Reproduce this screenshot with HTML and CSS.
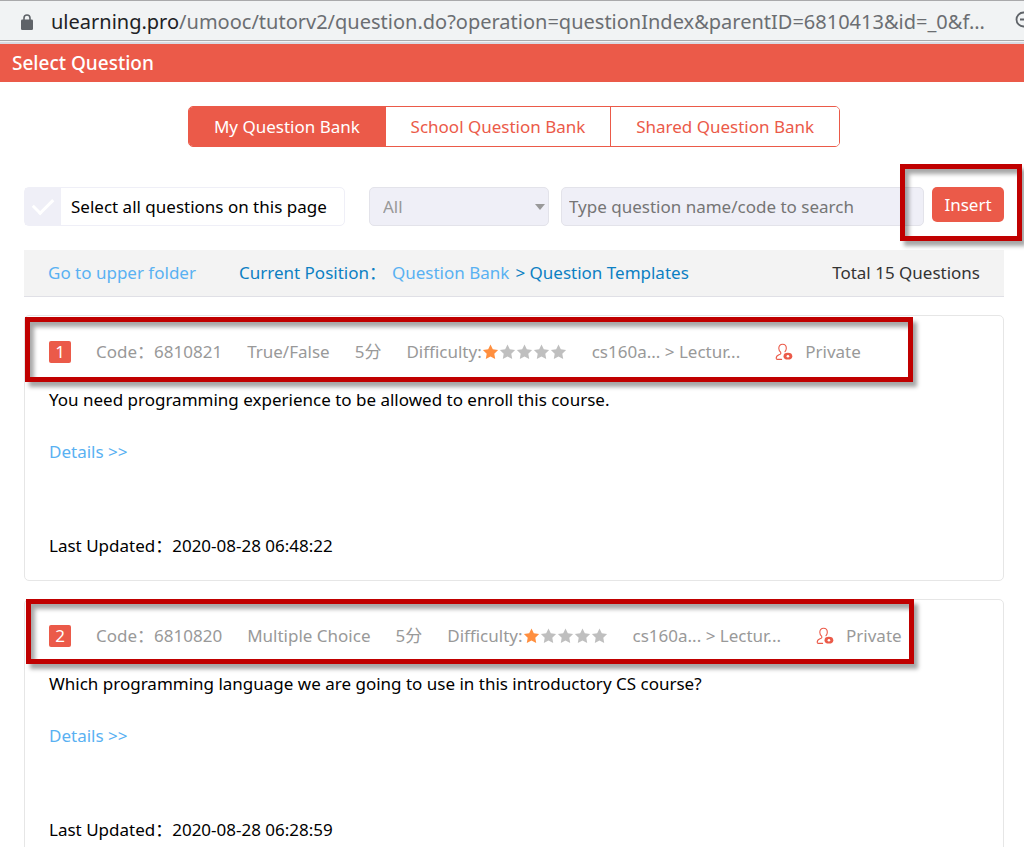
FILE: index.html
```html
<!DOCTYPE html>
<html lang="en">
<head>
    <meta charset="UTF-8">
    <meta name="viewport" content="width=device-width, initial-scale=1.0">
    <title>Select Question</title>
    <link rel="stylesheet" href="styles.css">
</head>
<body>
    <!-- shared icons -->
    <svg class="defs" width="0" height="0">
        <symbol id="star" viewBox="0 0 16 16">
            <path d="M8 0.6 L10.3 5.2 L15.6 6 L11.8 9.7 L12.7 15 L8 12.5 L3.3 15 L4.2 9.7 L0.4 6 L5.7 5.2 Z"/>
        </symbol>
        <symbol id="private" viewBox="0 0 18 18">
            <path d="M5.6 9.2 C4.3 8 3.8 6.6 3.8 5.2 C3.8 2.8 5.2 1.2 7.6 1.2 C10 1.2 11.3 2.8 11.3 5.2 C11.3 6.5 10.8 7.7 10 8.7 M5.6 9.2 C6.4 10.4 5.6 11.2 4 11.8 C1.9 12.6 1.2 13.6 1.2 15.2 C1.2 16 1.6 16.4 2.4 16.4 H6.6" fill="none" stroke="currentColor" stroke-width="1.1" stroke-linecap="round"/>
            <ellipse cx="12.9" cy="13.2" rx="4.4" ry="3.4" fill="currentColor"/>
            <circle cx="12.9" cy="13.2" r="1.3" fill="#fff"/>
        </symbol>
    </svg>

    <div class="addressbar">
        <svg class="lock" width="12" height="16" viewBox="0 0 12 16">
            <path d="M3 6 V4 A3 3 0 0 1 9 4 V6" fill="none" stroke="#5f6368" stroke-width="1.6"/>
            <rect x="0" y="5.5" width="12" height="10.5" rx="1.3" fill="#5f6368"/>
        </svg>
        <div class="url"><b>ulearning.pro</b>/umooc/tutorv2/question.do?operation=questionIndex&amp;parentID=6810413&amp;id=_0&amp;f...</div>
        <svg class="zoomout" width="22" height="22" viewBox="0 0 22 22">
            <path d="M8.5 1.5 A7 7 0 1 0 8.5 15.5 A7 7 0 1 0 8.5 1.5 M5 8.5 H12 M13.5 13.5 L20 20" fill="none" stroke="#5f6368" stroke-width="1.8"/>
        </svg>
    </div>
    <header class="title">Select Question</header>

    <main class="content">
        <div class="tabs">
            <button class="tab active">My Question Bank</button>
            <button class="tab">School Question Bank</button>
            <button class="tab">Shared Question Bank</button>
        </div>

        <div class="toolbar">
            <label class="selectall"><input type="checkbox" class="check"><span>Select all questions on this page</span></label>
            <div class="type">
                <select aria-label="Question type">
                    <option>All</option>
                    <option>True/False</option>
                    <option>Multiple Choice</option>
                </select>
            </div>
            <input class="search" type="text" aria-label="Search" placeholder="Type question name/code to search">
            <div class="insertbox">
                <button class="insert">Insert</button>
                <div class="mark mark-insert"></div>
            </div>
        </div>

        <div class="position">
            <a href="#" class="upper">Go to upper folder</a>
            <span class="current">Current Position：</span>
            <a href="#">Question Bank</a>
            <span class="folder">&gt; Question Templates</span>
            <span class="total">Total 15 Questions</span>
        </div>

        <div class="card">
            <div class="info">
                <span class="num">1</span>
                <span>Code：6810821</span>
                <span>True/False</span>
                <span>5分</span>
                <span class="level">Difficulty:<svg class="star on"><use href="#star"/></svg><svg class="star"><use href="#star"/></svg><svg class="star"><use href="#star"/></svg><svg class="star"><use href="#star"/></svg><svg class="star"><use href="#star"/></svg></span>
                <span>cs160a... &gt; Lectur...</span>
                <span class="share"><svg class="user"><use href="#private"/></svg>Private</span>
            </div>
            <p class="text">You need programming experience to be allowed to enroll this course.</p>
            <a href="#" class="details">Details &gt;&gt;</a>
            <p class="updated">Last Updated：2020-08-28 06:48:22</p>
            <div class="mark mark-first"></div>
        </div>

        <div class="card">
            <div class="info">
                <span class="num">2</span>
                <span>Code：6810820</span>
                <span>Multiple Choice</span>
                <span>5分</span>
                <span class="level">Difficulty:<svg class="star on"><use href="#star"/></svg><svg class="star"><use href="#star"/></svg><svg class="star"><use href="#star"/></svg><svg class="star"><use href="#star"/></svg><svg class="star"><use href="#star"/></svg></span>
                <span>cs160a... &gt; Lectur...</span>
                <span class="share"><svg class="user"><use href="#private"/></svg>Private</span>
            </div>
            <p class="text">Which programming language we are going to use in this introductory CS course?</p>
            <a href="#" class="details">Details &gt;&gt;</a>
            <p class="updated">Last Updated：2020-08-28 06:28:59</p>
            <div class="mark mark-second"></div>
        </div>
    </main>
</body>
</html>
```
FILE: styles.css
```css
*{
    box-sizing:border-box;
}
body{
    margin:0;
    height:100vh;
    overflow:hidden;
    background:#fff;
    color:#000;
    font-family:"Noto Sans","Noto Sans CJK SC",sans-serif;
    font-size:17px;
    line-height:24px;
}
button,input,select{
    font:inherit;
}
a{
    color:#59b1f2;
    text-decoration:none;
}
p{
    margin:0;
}
.defs{
    position:absolute;
}

/* browser bar */
.addressbar{
    display:flex;
    align-items:center;
    height:44px;
    padding:0 0 2px 21px;
    overflow:hidden;
    border-top:1px solid #a9a9ab;
    background:linear-gradient(#f1f3f4 39px,#a9a9ab 39px,#a9a9ab 40px,#f1f3f4 40px,#f1f3f4 41px,#d8dae2 41px);
}
.lock{
    flex:none;
}
.url{
    flex:none;
    width:965px;
    padding-left:18px;
    font-size:20px;
    white-space:nowrap;
    color:#6b6e72;
}
.url b{
    font-weight:normal;
    color:#202124;
}
.zoomout{
    flex:none;
    margin-left:17px;
}
.title{
    padding:7px 12px;
    background:#eb5a49;
    color:#fff;
    font-size:19px;
    font-weight:500;
}

.content{
    padding:24px 20px 24px 24px;
}
.tabs{
    display:flex;
    width:652px;
    margin:0 auto 40px 164px;
    border:1px solid #eb5a49;
    border-radius:5px;
    overflow:hidden;
}
.tab{
    flex:auto;
    height:39px;
    padding:0;
    border:0;
    border-left:1px solid #eb5a49;
    background:#fff;
    color:#eb5a49;
}
.tab:first-child{
    border-left:0;
}
.tab.active{
    background:#eb5a49;
    color:#fff;
}

.toolbar{
    display:flex;
    height:39px;
    margin-bottom:24px;
}
.selectall{
    display:flex;
    align-items:center;
    width:321px;
    margin-right:24px;
    border:1px solid #efeff7;
    border-radius:5px;
    white-space:nowrap;
}
.check{
    appearance:none;
    display:grid;
    place-items:center;
    width:36px;
    height:37px;
    margin:0 10px 0 0;
    background:#efeff7;
}
.check::before{
    content:"";
    width:17px;
    height:9px;
    margin-bottom:5px;
    border-left:3px solid #fff;
    border-bottom:3px solid #fff;
    transform:rotate(-45deg);
}
.type{
    display:grid;
    align-items:center;
    width:180px;
    margin-right:12px;
}
.type select,.type::after{
    grid-area:1/1;
}
.type select{
    appearance:none;
    width:100%;
    height:39px;
    padding:0 13px;
    border:1px solid #e3e3ea;
    border-radius:5px;
    background:#efeff7;
    color:#999;
}
.type::after{
    content:"";
    justify-self:end;
    margin-right:4px;
    border:5px solid transparent;
    border-top:6px solid #999;
    border-bottom:0;
    z-index:1;
}
.search{
    flex:1;
    min-width:0;
    height:39px;
    padding:0 7px;
    border:1px solid #e3e3ea;
    border-radius:5px;
    background:#efeff7;
}
.search::placeholder{
    color:#757575;
}
.insertbox{
    position:relative;
    margin-left:8px;
}
.insert{
    width:72px;
    height:35px;
    padding:0;
    border:0;
    border-radius:5px;
    background:#eb5a49;
    color:#fff;
}

.position{
    display:flex;
    align-items:center;
    height:47px;
    margin-bottom:18px;
    padding:0 24px;
    border-bottom:1px solid #e0e0e6;
    background:#f3f3f3;
    white-space:nowrap;
}
.upper{
    margin-right:43px;
}
.current,.folder{
    color:#0c80c3;
}
.current{
    margin-right:6px;
}
.folder{
    margin-left:6px;
}
.total{
    margin-left:auto;
    color:#333;
}

.card{
    position:relative;
    height:266px;
    margin-bottom:18px;
    padding:24px;
    border:1px solid #e6e6e6;
    border-radius:5px;
}
.info{
    display:flex;
    align-items:center;
    gap:25px;
    margin-bottom:24px;
    color:#999;
    white-space:nowrap;
}
.num{
    width:22px;
    height:22px;
    border-radius:2px;
    background:#eb5a49;
    color:#fff;
    line-height:22px;
    text-align:center;
}
.level,.share{
    display:flex;
    align-items:center;
}
.star{
    width:17px;
    height:16px;
    fill:#bfbfbf;
}
.star.on{
    fill:#ff8f3f;
}
.user{
    width:18px;
    height:18px;
    margin:0 12px 0 10px;
    color:#eb5a49;
}
.details{
    display:block;
    margin:28px 0 70px;
}

/* red frames over the page */
.mark{
    position:absolute;
    border:5px solid #c00000;
    box-shadow:4px 5px 4px rgba(0,0,0,.35),inset 4px 5px 4px rgba(0,0,0,.35);
    pointer-events:none;
}
.mark-insert{
    top:-23px;
    left:-32px;
    width:122px;
    height:77px;
}
.mark-first{
    top:1px;
    left:0;
    right:90px;
    height:65px;
}
.mark-second{
    top:-1px;
    left:1px;
    right:89px;
    height:65px;
}
```
